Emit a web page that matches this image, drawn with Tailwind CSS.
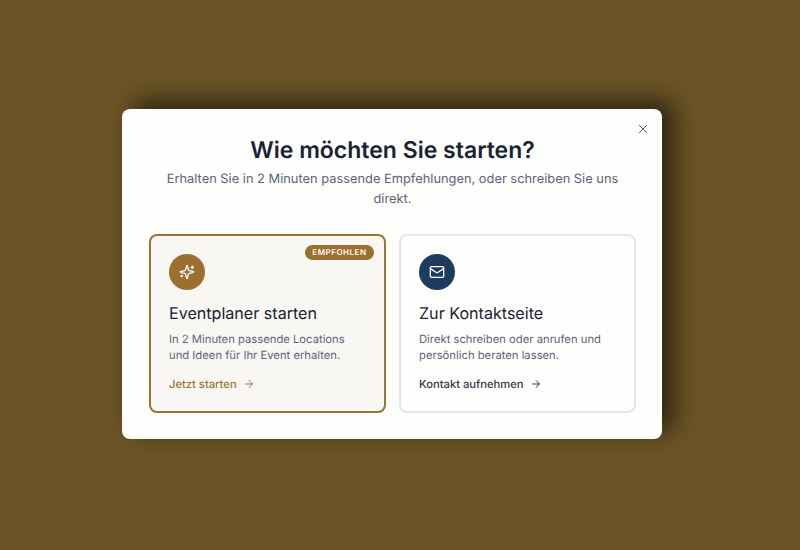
<!DOCTYPE html>
<html lang="de">
<head>
  <meta charset="UTF-8">
  <title>Wie möchten Sie starten?</title>
  <script src="https://cdn.jsdelivr.net/npm/@tailwindcss/browser@4"></script>
</head>
<body class="bg-[#6b5425] font-['Inter',sans-serif] [text-rendering:geometricPrecision] h-[550px] overflow-hidden">
  <div class="h-full flex items-center justify-center pr-4 pb-[2px]">
    <div class="relative w-[540px] h-[330px] bg-[#fefefd] rounded-lg shadow-[12px_-8px_24px_0_rgba(0,0,0,0.58)] pl-[27px] pr-[26px] pt-[25px]">
      <button class="absolute top-[12.5px] right-[12.5px] text-[#4b5563]">
        <svg class="block w-[14px] h-[14px]" viewBox="0 0 24 24" fill="none" stroke="currentColor" stroke-width="1.7" stroke-linecap="round" stroke-linejoin="round"><path d="M18 6 6 18"/><path d="m6 6 12 12"/></svg>
      </button>

      <h1 class="text-[23px] leading-8 font-semibold text-[#1a2233] text-center">Wie möchten Sie starten?</h1>
      <p class="mt-[4px] text-[12.85px] leading-5 text-[#5c6478] text-center">Erhalten Sie in 2 Minuten passende Empfehlungen, oder schreiben Sie uns direkt.</p>

      <div class="mt-[24px] grid grid-cols-2 gap-[13px]">
        <div class="relative h-[179px] rounded-lg border-2 border-[#9c7433] bg-[#f9f7f4] px-[18px] pt-[18px]">
          <span class="absolute top-[9px] right-[10px] h-[15px] px-[7.5px] rounded-full bg-[#9c6f2e] text-white text-[8px] leading-[15px] font-semibold tracking-[0.5px]">EMPFOHLEN</span>
          <div class="w-9 h-9 rounded-full bg-[#9c6f2e] flex items-center justify-center text-white">
            <svg class="w-4 h-4" viewBox="0 0 24 24" fill="none" stroke="currentColor" stroke-width="2" stroke-linecap="round" stroke-linejoin="round"><path d="M9.937 15.5A2 2 0 0 0 8.5 14.063l-6.135-1.582a.5.5 0 0 1 0-.962L8.5 9.936A2 2 0 0 0 9.937 8.5l1.582-6.135a.5.5 0 0 1 .963 0L14.063 8.5A2 2 0 0 0 15.5 9.937l6.135 1.581a.5.5 0 0 1 0 .964L15.5 14.063a2 2 0 0 0-1.437 1.437l-1.582 6.135a.5.5 0 0 1-.963 0z"/><path d="M20 3v4"/><path d="M22 5h-4"/><path d="M4 17v2"/><path d="M5 18H3"/></svg>
          </div>
          <h2 class="mt-[11px] text-[16.1px] leading-6 text-[#1a2233]">Eventplaner starten</h2>
          <p class="mt-[6px] text-[11.25px] leading-4 text-[#5c6478]">In 2 Minuten passende Locations und Ideen für Ihr Event erhalten.</p>
          <div class="mt-[13px] flex items-center gap-[6px] text-[11.2px] leading-4 font-medium text-[#9c7433]">
            Jetzt starten
            <svg class="w-3 h-3" viewBox="0 0 24 24" fill="none" stroke="currentColor" stroke-width="2" stroke-linecap="round" stroke-linejoin="round"><path d="M5 12h14"/><path d="m12 5 7 7-7 7"/></svg>
          </div>
        </div>

        <div class="h-[179px] rounded-lg border-2 border-[#e7e6e2] bg-[#fefefd] px-[18px] pt-[18px]">
          <div class="w-9 h-9 rounded-full bg-[#1e3a5f] flex items-center justify-center text-white">
            <svg class="w-4 h-4" viewBox="0 0 24 24" fill="none" stroke="currentColor" stroke-width="2" stroke-linecap="round" stroke-linejoin="round"><rect x="2" y="4" width="20" height="16" rx="2"/><path d="m22 7-8.97 5.7a1.94 1.94 0 0 1-2.06 0L2 7"/></svg>
          </div>
          <h2 class="mt-[11px] text-[16.1px] leading-6 text-[#1a2233]">Zur Kontaktseite</h2>
          <p class="mt-[6px] text-[11.25px] leading-4 text-[#5c6478]">Direkt schreiben oder anrufen und persönlich beraten lassen.</p>
          <div class="mt-[13px] flex items-center gap-[6px] text-[11.2px] leading-4 font-medium text-[#333a48]">
            Kontakt aufnehmen
            <svg class="w-3 h-3" viewBox="0 0 24 24" fill="none" stroke="currentColor" stroke-width="2" stroke-linecap="round" stroke-linejoin="round"><path d="M5 12h14"/><path d="m12 5 7 7-7 7"/></svg>
          </div>
        </div>
      </div>
    </div>
  </div>
</body>
</html>
